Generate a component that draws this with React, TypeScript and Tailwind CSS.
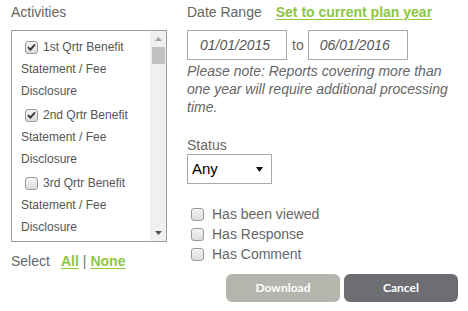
import { ReactNode } from "react";

function Box({ checked }: { checked?: boolean }) {
  return (
    <span className="inline-flex h-[13px] w-[13px] shrink-0 items-center justify-center rounded-[3px] border border-[#9a9a9a] bg-gradient-to-b from-[#f4f4f4] to-[#dcdcdc]">
      {checked && (
        <svg width="9" height="8" viewBox="0 0 9 8">
          <path d="M1 4.2 L3.4 6.6 L8 1.4" fill="none" stroke="#333" strokeWidth="1.8" />
        </svg>
      )}
    </span>
  );
}

const activities = [
  { n: "1st", checked: true },
  { n: "2nd", checked: true },
  { n: "3rd", checked: false },
];

function GreenLink({ children }: { children: ReactNode }) {
  return <a className="font-bold text-[#8dc63f] underline underline-offset-2">{children}</a>;
}

export default function App() {
  return (
    <div className="flex h-[311px] w-[468px] gap-[20px] bg-white pl-[11px] font-['Liberation_Sans',Arial,sans-serif] text-[14px] text-[#666]">
      {/* left column */}
      <div className="flex w-[156px] flex-col">
        <div className="mt-[4px] leading-[16px]">Activities</div>
        <div className="mt-[10px] flex h-[212px] border border-[#9d9d9d]">
          <div className="flex-1 overflow-hidden pl-[9px] pt-[5px] text-[12px] leading-[22px] text-[#555]">
            {activities.map((a) => (
              <div key={a.n} className="mb-[2px]">
                <div className="flex items-center">
                  <span className="ml-[4px] mr-[5px] flex">
                    <Box checked={a.checked} />
                  </span>
                  {a.n} Qrtr Benefit
                </div>
                <div>Statement / Fee</div>
                <div>Disclosure</div>
              </div>
            ))}
          </div>
          <div className="flex w-[16px] flex-col items-center bg-[#f0f0f0]">
            <svg className="mt-[6px]" width="7" height="4" viewBox="0 0 7 4">
              <path d="M3.5 0 L7 4 L0 4 Z" fill="#a3a3a3" />
            </svg>
            <div className="mt-[6px] h-[17px] w-[13px] bg-[#c1c1c1]" />
            <div className="flex-1" />
            <svg className="mb-[6px]" width="7" height="4" viewBox="0 0 7 4">
              <path d="M0 0 L7 0 L3.5 4 Z" fill="#505050" />
            </svg>
          </div>
        </div>
        <div className="mt-[11px] flex leading-[16px]">
          <span className="mr-[11px]">Select</span>
          <GreenLink>All</GreenLink>
          <span className="mx-[4px] text-[#777]">|</span>
          <GreenLink>None</GreenLink>
        </div>
      </div>

      {/* right column */}
      <div className="flex w-[271px] flex-col">
        <div className="mt-[4px] flex leading-[16px]">
          <span>Date Range</span>
          <span className="ml-[14px]">
            <GreenLink>Set to current plan year</GreenLink>
          </span>
        </div>
        <div className="mt-[10px] flex items-center">
          <div className="flex h-[30px] w-[100px] items-center border border-[#a9a9a9] pl-[12px] italic text-[#555]">
            01/01/2015
          </div>
          <span className="ml-[5px] mr-[4px]">to</span>
          <div className="flex h-[30px] w-[100px] items-center border border-[#a9a9a9] pl-[11px] italic text-[#555]">
            06/01/2016
          </div>
        </div>
        <p className="mt-[2px] w-[271px] italic leading-[18px]">
          Please note: Reports covering more than one year will require additional processing time.
        </p>
        <div className="mt-[21px] leading-[16px]">Status</div>
        <div className="mt-[1px] flex h-[30px] w-[85px] items-center justify-between border border-[#a9a9a9] pl-[4px] pr-[8px] text-[15px] text-black">
          <span>Any</span>
          <svg width="7" height="5" viewBox="0 0 7 5">
            <path d="M0 0 L7 0 L3.5 5 Z" fill="#111" />
          </svg>
        </div>
        <div className="mt-[20px] flex flex-col leading-[20px]">
          {["Has been viewed", "Has Response", "Has Comment"].map((t) => (
            <div key={t} className="flex items-center">
              <span className="ml-[4px] mr-[8px] flex">
                <Box />
              </span>
              {t}
            </div>
          ))}
        </div>
        <div className="mt-[10px] flex justify-end gap-[4px] font-['Lato',sans-serif] text-[12px] font-bold text-white">
          <button className="h-[28px] w-[114px] rounded-[6px] bg-[#b5b5ae]">Download</button>
          <button className="h-[28px] w-[114px] rounded-[6px] bg-[#6d6e71]">Cancel</button>
        </div>
      </div>
    </div>
  );
}
